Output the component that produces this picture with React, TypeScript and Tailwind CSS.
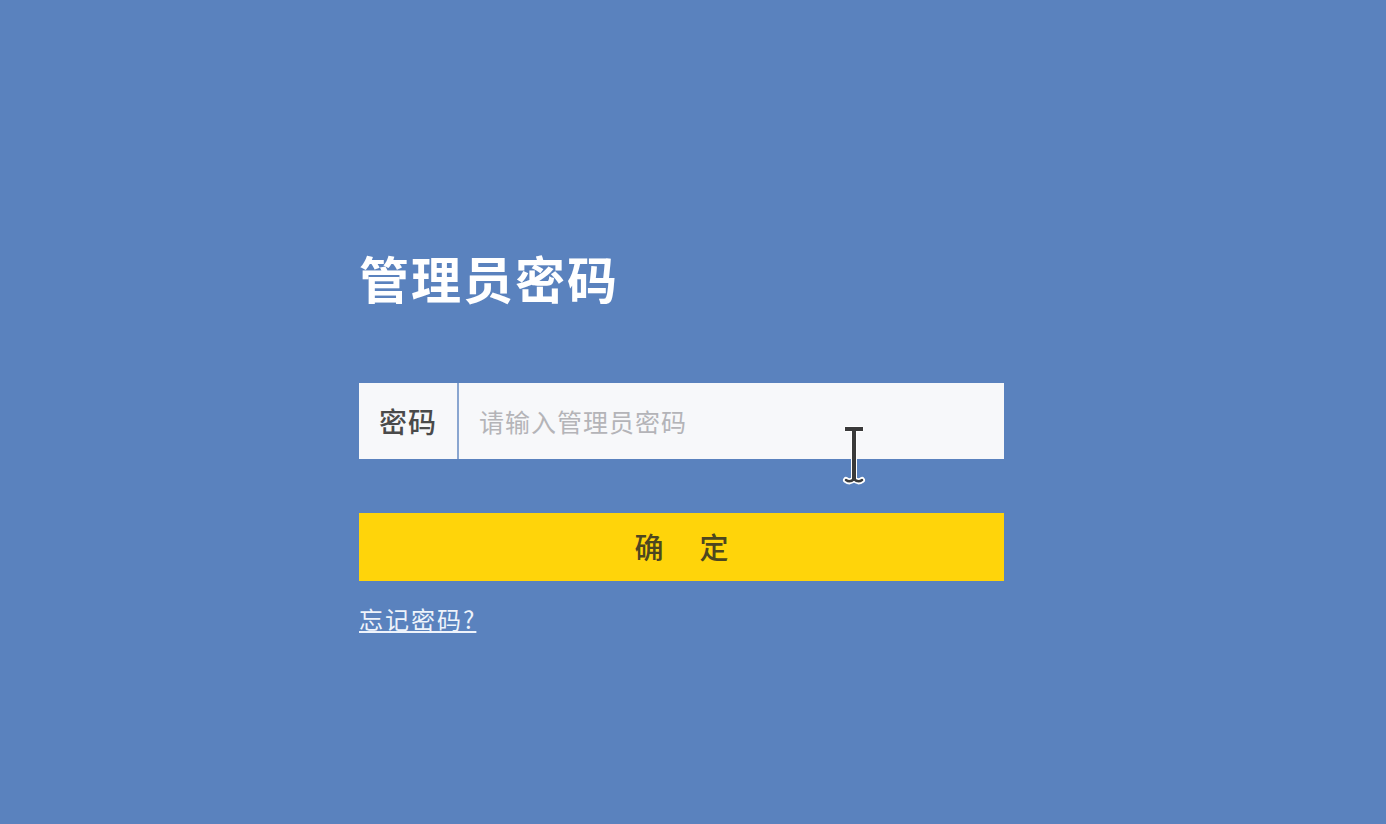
import React from "react";

export default function App() {
  return (
    <div
      className="w-full h-[824px] bg-[#5a82be] overflow-hidden"
      style={{ fontFamily: '"Noto Sans CJK SC", "Noto Sans", sans-serif' }}
    >
      <div className="ml-[359px] pt-[247px] w-[645px] flex flex-col">
        <h1 className="text-[50px] leading-[60px] font-bold text-white tracking-[2px]">管理员密码</h1>
        <div className="mt-[76px] h-[76px] flex bg-[#f7f8fa] relative">
          <div className="w-[98px] flex items-center justify-center text-[28px] text-[#4a4a4a] font-medium tracking-[1px]">密码</div>
          <div className="w-[2px] bg-[#8aa6d0]" />
          <div className="flex-1 flex items-center pl-[20px] pt-[2px] text-[25px] text-[#b4b4b8] tracking-[1px]">请输入管理员密码</div>
          <svg className="absolute left-[483px] top-[43px]" width="26" height="60" viewBox="0 0 26 60">
            <path d="M5 3 H19 M12 3 V52 M4 54 Q8 57 12 53 Q16 57 20 54" stroke="#ffffff" strokeWidth="6" fill="none" strokeLinecap="round" />
            <path d="M5 3 H19 M12 3 V52" stroke="#3a3a3a" strokeWidth="4" fill="none" strokeLinecap="square" />
            <path d="M4 54 Q8 57 12 53 Q16 57 20 54" stroke="#3a3a3a" strokeWidth="2.5" fill="none" strokeLinecap="round" />
          </svg>
        </div>
        <button className="mt-[54px] h-[68px] bg-[#ffd40a] flex items-center justify-center text-[29px] text-[#4d4620] font-medium">
          <span>确</span>
          <span className="ml-[36px]">定</span>
        </button>
        <div className="mt-[20px]">
          <a className="text-[24px] text-[#eef3fb] underline underline-offset-2 tracking-[2px]">忘记密码?</a>
        </div>
      </div>
    </div>
  );
}
